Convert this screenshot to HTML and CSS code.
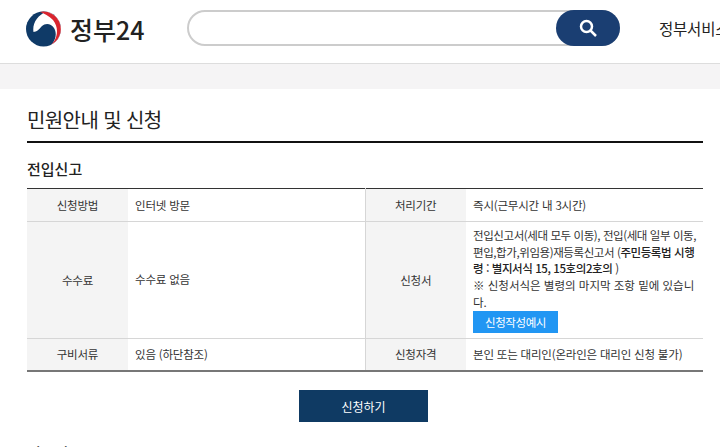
FILE: index.html
```html
<!DOCTYPE html>
<html lang="ko">

<head>
    <meta charset="UTF-8">
    <meta name="viewport" content="width=device-width, initial-scale=1.0">
    <title>정부24</title>
    <link rel="stylesheet" href="styles.css">
</head>

<body>
    <header class="top">
        <div class="logo">
            <svg class="emblem" width="37" height="36" viewBox="0 0 37 36">
                <circle cx="18.500" cy="18" r="17.500" fill="#0f3a67" />
                <path d="M8.500 21C7 12 13 4 21 .7A17.500 17.500 0 0 1 27 33.300C31 28 32 22 29 17C26 12 20 12 17 15C14.500 18 11.500 21 8.500 21Z" fill="#fff" />
                <path d="M15 .9A17.500 17.500 0 0 1 26 33.800C32.500 28 34.500 17 28 9C24 4.500 19 2.500 15 .9Z" fill="#d9252f" />
            </svg>
            <span class="logo-text">정부24</span>
        </div>
        <div class="search">
            <input type="text" class="search-input">
            <button class="search-btn">
                <svg width="20" height="20" viewBox="0 0 20 20">
                    <circle cx="8.500" cy="8.500" r="5.500" fill="none" stroke="#fff" stroke-width="2.500" />
                    <path d="M12.500 12.500L18 18" stroke="#fff" stroke-width="2.500" />
                </svg>
            </button>
        </div>
        <span class="top-menu">정부서비스</span>
    </header>
    <div class="band"></div>

    <main class="content">
        <h1 class="page-title">민원안내 및 신청</h1>
        <h2 class="sub-title">전입신고</h2>

        <table class="info">
            <tr class="row-short">
                <th>신청방법</th>
                <td>인터넷 방문</td>
                <th>처리기간</th>
                <td>즉시(근무시간 내 3시간)</td>
            </tr>
            <tr>
                <th>수수료</th>
                <td>수수료 없음</td>
                <th>신청서</th>
                <td class="form-cell">
                    전입신고서(세대 모두 이동), 전입(세대 일부 이동, 편입,합가,위임용)재등록신고서 (<b>주민등록법 시행령 : 별지서식 15, 15호의2호의</b> )<br>
                    <span class="notice">※ 신청서식은 별령의 마지막 조항 밑에 있습니다.</span><br>
                    <a class="sample-btn">신청작성예시</a>
                </td>
            </tr>
            <tr class="row-short">
                <th>구비서류</th>
                <td>있음 (하단참조)</td>
                <th>신청자격</th>
                <td>본인 또는 대리인(온라인은 대리인 신청 불가)</td>
            </tr>
        </table>

        <div class="apply">
            <button class="apply-btn">신청하기</button>
        </div>

        <h2 class="sub-title next">기본정보</h2>
    </main>
</body>

</html>
```

FILE: styles.css
```css
* {
    margin: 0;
    padding: 0;
    box-sizing: border-box;
}

html,
body {
    height: 100%;
    overflow: hidden;
}

body {
    background: #fff;
    color: #222;
    font-family: "Noto Sans CJK KR", "Noto Sans", sans-serif;
}

.top {
    height: 64px;
    display: flex;
    align-items: center;
    padding: 0 0 7px 25px;
    border-bottom: 1px solid #ddd;
    white-space: nowrap;
    overflow: hidden;
}

.logo {
    display: flex;
    align-items: center;
    width: 162px;
    padding-top: 2px;
    flex: none;
}

.emblem {
    flex: none;
    margin-right: 8px;
}

.logo-text {
    font-size: 25px;
    font-weight: 500;
    color: #222;
}

.search {
    width: 433px;
    height: 36px;
    flex: none;
    display: flex;
    justify-content: space-between;
    border: 2px solid #ccc;
    border-radius: 18px;
}

.search-input {
    flex: 1;
    min-width: 0;
    border: none;
    background: transparent;
    outline: none;
}

.search-btn {
    width: 64px;
    height: 36px;
    margin: -2px -2px 0 0;
    flex: none;
    display: flex;
    align-items: center;
    justify-content: center;
    border: none;
    border-radius: 18px;
    background: #1a3e72;
}

.top-menu {
    margin-left: 39px;
    font-size: 15.500px;
    letter-spacing: -0.2px;
    color: #222;
}

.band {
    height: 25px;
    background: #f5f4f5;
}

.content {
    padding: 0 17px 0 27px;
}

.page-title {
    height: 54px;
    padding-top: 13px;
    border-bottom: 2px solid #111;
    font-size: 20px;
    font-weight: 400;
    line-height: 36px;
    letter-spacing: -0.6px;
    color: #222;
}

.sub-title {
    margin-top: 15px;
    font-size: 15px;
    font-weight: 500;
    line-height: 22px;
    color: #222;
}

.info {
    width: 676px;
    margin-top: 8px;
    border-collapse: collapse;
    table-layout: fixed;
    border-top: 1px solid #333;
    border-bottom: 2px solid #777;
    font-size: 11.500px;
    letter-spacing: -0.2px;
    color: #333;
}

.info th {
    width: 101px;
    background: #f4f4f4;
    font-weight: 400;
    text-align: center;
}

.info td {
    padding: 3px 7px;
    line-height: 16.700px;
    vertical-align: middle;
}

.info tr + tr > * {
    border-top: 1px solid #d6d6d6;
}

.info td + th {
    border-left: 1px solid #d6d6d6;
}

.row-short {
    height: 33px;
}

.info .form-cell {
    padding: 5px 6px 5px 7px;
    letter-spacing: -0.42px;
}

.notice {
    letter-spacing: 0;
}

.info b {
    font-weight: 500;
    color: #222;
}

.sample-btn {
    display: block;
    width: 85px;
    height: 22px;
    background: #2196f3;
    color: #fff;
    text-align: center;
    line-height: 22px;
}

.apply {
    display: flex;
    justify-content: center;
    margin-top: 18px;
    padding-right: 3px;
}

.apply-btn {
    width: 129px;
    height: 32px;
    border: none;
    background: #0f3a63;
    color: #fff;
    font-family: inherit;
    font-size: 12px;
}

.next {
    margin-top: 20px;
}
```
